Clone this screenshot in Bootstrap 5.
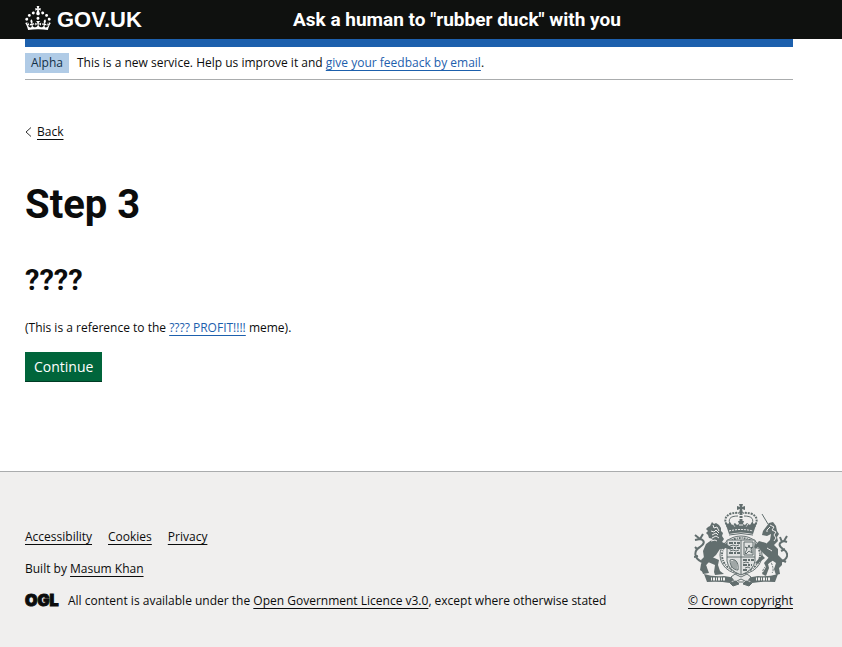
<!DOCTYPE html>
<html lang="en">
<head>
<meta charset="utf-8">
<meta name="viewport" content="width=device-width, initial-scale=1">
<title>Step 3 - Ask a human to "rubber duck" with you</title>
<link href="https://cdn.jsdelivr.net/npm/bootstrap@5.3.0/dist/css/bootstrap.min.css" rel="stylesheet">
<style>
body{font-family:"Open Sans","Liberation Sans",sans-serif;font-size:12px;line-height:20px;color:#0b0c0c;background:#f0efee}
.page-width{padding-left:25px;padding-right:49px}
.site-header{background:#0f110f;color:#fff}
.site-header .row{height:39px}
.brand-link{color:#fff;font:bold 22px/28px "Liberation Sans",sans-serif;gap:6px}
.service-link,h1,h2{font-family:Roboto,sans-serif}
.service-link{color:#fff;font-size:19px;line-height:24px;padding-left:12px}
.blue-bar{height:8px;background:#1d60ad}
.phase{border-bottom:1px solid #aaacad;padding:6px 0;gap:8px}
.phase-tag{background:#b0cbe6;color:#123047;padding:0 6px}
.line-link{color:#0b0c0c;text-decoration:underline;text-underline-offset:3px;text-decoration-thickness:1px}
.blue-link{color:#1d60ad}
.main-area{background:#fff;padding-bottom:90px}
.back-link{margin-top:42px;gap:5px}
h1{font-size:40px;line-height:44px;margin:41px 0 37px}
h2{font-size:29px;line-height:32px;margin:0 0 22px}
.main-area p{margin-bottom:14px}
.go-btn{background:#00653b;color:#fff;border:0;border-radius:0;box-shadow:0 1px 0 #003b24;font-size:14px;line-height:20px;padding:5px 9px 4px}
.go-btn:hover{background:#00542f;color:#fff}
.site-footer{border-top:1px solid #aaacad;padding-top:32px;padding-bottom:36px}
.footer-list{gap:16px}
.footer-text{gap:12px}
.licence{gap:9px}
.ogl{font:900 16px Inter,sans-serif}
</style>
<script defer src="https://cdn.jsdelivr.net/npm/bootstrap@5.3.0/dist/js/bootstrap.bundle.min.js"></script>
</head>
<body>
<header class="site-header page-width">
  <div class="row gx-0 align-items-center">
    <div class="col-4"><a href="#" class="brand-link d-flex align-items-start text-decoration-none">
      <svg width="26" height="24" viewBox="0 0 32 30" fill="currentColor" aria-hidden="true"><path d="M22.6 10.4c-1 .4-2-.1-2.4-1-.4-.9.1-2 1-2.4.9-.4 2 .1 2.4 1s-.1 2-1 2.4m-5.9 6.7c-.9.4-2-.1-2.4-1-.4-.9.1-2 1-2.4.9-.4 2 .1 2.4 1s-.1 2-1 2.4m10.8-3.7c-1 .4-2-.1-2.4-1-.4-.9.1-2 1-2.4.9-.4 2 .1 2.4 1s0 2-1 2.4m3.3 4.8c-1 .4-2-.1-2.4-1-.4-.9.1-2 1-2.4.9-.4 2 .1 2.4 1s-.1 2-1 2.4M17 4.7l2.3 1.2V2.5l-2.3.7-.2-.2.9-3h-3.4l.9 3-.2.2c-.1.1-2.3-.7-2.3-.7v3.4L15 4.7c.1.1.1.2.2.2l-1.3 4c-.1.2-.1.4-.1.6 0 1.1.8 2 1.9 2.2h.7c1-.2 1.9-1.1 1.9-2.1 0-.2 0-.4-.1-.6l-1.3-4c-.1-.2 0-.2.1-.3m-7.6 5.7c.9.4 2-.1 2.4-1 .4-.9-.1-2-1-2.4-.9-.4-2 .1-2.4 1s0 2 1 2.4m-5 3c.9.4 2-.1 2.4-1 .4-.9-.1-2-1-2.4-.9-.4-2 .1-2.4 1s.1 2 1 2.4m-3.2 4.8c.9.4 2-.1 2.4-1 .4-.9-.1-2-1-2.4-.9-.4-2 .1-2.4 1s0 2 1 2.4m14.8 11c4.4 0 8.6.3 12.3.8 1.1-4.5 2.4-7 3.7-8.8l-2.5-.9c.2 1.3.3 1.9 0 2.7-.4-.4-.8-1.1-1.1-2.3l-1.2 4c.7-.5 1.3-.8 2-.9-1.1 2.5-2.6 3.1-3.5 3-1.1-.2-1.7-1.2-1.5-2.1.3-1.2 1.5-1.5 2.1-.1 1.1-2.3-.8-3-2-2.3 1.9-1.9 2.1-3.5.6-5.6-2.1 1.6-2.1 3.2-1.2 5.5-1.2-1.4-3.2-.6-2.5 1.6.9-1.4 2.1-.5 1.9.8-.2 1.1-1.7 2.1-3.5 1.9-2.7-.2-2.9-2.1-2.9-3.6.7-.1 1.9.5 2.9 1.9l.4-4.3c-1.1 1.1-2.1 1.4-3.2 1.4.4-1.2 2.1-3 2.1-3h-5.4s1.7 1.9 2.1 3c-1.1 0-2.1-.2-3.2-1.4l.4 4.3c1-1.4 2.2-2 2.9-1.9-.1 1.5-.2 3.4-2.9 3.6-1.9.2-3.4-.8-3.5-1.9-.2-1.3 1-2.2 1.9-.8.7-2.3-1.2-3-2.5-1.6.9-2.2.9-3.9-1.2-5.5-1.5 2-1.3 3.7.6 5.6-1.2-.7-3.1 0-2 2.3.6-1.4 1.8-1.1 2.1.1.2.9-.3 1.9-1.5 2.1-.9.2-2.4-.5-3.5-3 .6 0 1.2.3 2 .9l-1.2-4c-.3 1.1-.7 1.9-1.1 2.3-.3-.8-.2-1.4 0-2.7l-2.9.9C1.3 23 2.6 25.5 3.7 30c3.7-.5 7.9-.8 12.3-.8"/></svg>
      <span>GOV.UK</span></a></div>
    <div class="col-8"><a href="#" class="service-link d-block fw-bold text-decoration-none text-nowrap">Ask a human to "rubber duck" with you</a></div>
  </div>
</header>
<main class="main-area page-width">
  <div class="blue-bar"></div>
  <div class="phase d-flex">
    <strong class="phase-tag fw-normal">Alpha</strong>
    <span>This is a new service. Help us improve it and <a class="line-link blue-link" href="#">give your feedback by email</a>.</span>
  </div>
  <div class="back-link d-flex align-items-center">
    <svg width="7" height="10" viewBox="0 0 7 10" fill="none" stroke="#333" aria-hidden="true"><path d="M6 .5 1 5l5 4.5"/></svg>
    <a class="line-link" href="#">Back</a>
  </div>
  <h1 class="fw-bold">Step 3</h1>
  <h2 class="fw-bold">????</h2>
  <p>(This is a reference to the <a class="line-link blue-link" href="#">???? PROFIT!!!!</a> meme).</p>
  <button type="button" class="btn go-btn">Continue</button>
</main>
<footer class="site-footer page-width">
  <div class="d-flex justify-content-between align-items-end">
    <div class="footer-text d-flex flex-column">
      <ul class="footer-list list-unstyled d-flex mb-0">
        <li><a class="line-link" href="#">Accessibility</a></li>
        <li><a class="line-link" href="#">Cookies</a></li>
        <li><a class="line-link" href="#">Privacy</a></li>
      </ul>
      <div>Built by <a class="line-link" href="#">Masum Khan</a></div>
      <div class="licence d-flex align-items-center">
        <svg class="ogl flex-shrink-0" width="34" height="16" viewBox="0 0 34 16" fill="#0b0c0c" stroke="#0b0c0c" stroke-width="1" overflow="visible"><text x="0" y="13">OGL</text></svg>
        <span>All content is available under the <a class="line-link" href="#">Open Government Licence v3.0</a>, except where otherwise stated</span>
      </div>
    </div>
    <a class="line-link d-flex flex-column align-items-center text-nowrap" href="#">
      <svg class="mb-1" width="94" height="83" viewBox="0 0 94 83" fill="none" stroke="#626e6e" stroke-width="1" stroke-linejoin="round" aria-hidden="true">
        <!-- crown -->
        <path d="M45 0h4l-1 3 3-1v4l-3-1 1 4h-4l1-4-3 1V2l3 1z" fill="#626e6e" stroke="none"/>
        <path d="M34 23C27 13 35 8 45 9M60 23c7-10-1-15-11-14" stroke-width="2" stroke-dasharray="2 1"/>
        <path d="M37 22c-4-7-1-10 7-10M57 22c4-7 1-10-7-10"/>
        <path d="M47 9v9" stroke-width="3" stroke-dasharray="2 1"/>
        <path d="m31 18 3 2 2-2 2 3 3-2 2 2 2-1-1-3h6l-1 3 2 1 2-2 3 2 2-3 2 2 3-2-4 12q-12-3-24 0z" fill="#626e6e" stroke="none"/>
        <path d="M35 27q12-3 24 0M39 20l2 3m5-3v3m2-3v3m6-3-2 3" stroke="#f0efee" stroke-dasharray="2 1"/>
        <path d="M35 31q12-3 24 0" stroke-width="1"/>
        <!-- garter and quartered shield -->
        <ellipse cx="47" cy="51" rx="21" ry="19"/>
        <ellipse cx="47" cy="51" rx="19" ry="17" stroke-width="2" stroke-dasharray="1 1 2 1"/>
        <path d="M33 36h28v21q-1 9-14 14-13-5-14-14z" fill="#dfe1e0"/>
        <path d="M47 36v35M33 53h28"/>
        <g stroke-width="2" stroke-dasharray="4 1 2 1"><path d="M35 39h11M35 44h11M35 49h11M49 56h11M49 61h9M49 66h5"/></g>
        <path d="m36 42 3-1 3 1 3-1m-9 6 3-1 3 1 3-1m4 13 3-1 3 1m-4 5 3-1 2 1"/>
        <path d="m51 49 2-4-2-2 3 1 1-3 1 3 3-1-2 2 1 4-3-2-3 3zM50 38h9v13h-9z"/>
        <path d="M36 56c5-2 9 2 8 10-5 0-8-4-8-10m2 1v7m2-8v9m2-8v8"/>
        <!-- lion -->
        <g fill="#626e6e" stroke="none">
          <path d="m16 22 2-4 2 2 2-1 3 2 2 3v3l2 2-1 3 2 3-2 3 6 3 3 5-5-2-6 1-4 6-7 6-3 4 1 6-3 2-4-3 1-6 3-6-1-7 3-7 7-5-4-1-1-3-2-2 2-2-2-2 2-2z"/>
          <path d="m25 39 11 3 2 3-6-1-9 1zM7 56l5-5 5 5-5 5 3 8-6 1-1-3 1-4zM18 53l7 3-1 5 2 6 4 3-9 1-1-3 1-7-7-3z"/>
        </g>
        <path d="m19 21 1 3 3-1 2 4m-8 0 3 1 2-2 3 3m-7 2 4-2 2 2m-6 3 4-2 3 2m-8 3 4-1 2 1" stroke="#f0efee"/>
        <path d="M8 58C-1 54 0 46 6 43c6-4 4-7 0-8l-5-4m5 4-5 1m5-1 3-5M4 46l-3-3m3 9-4 1" stroke-width="2"/>
        <!-- unicorn -->
        <g fill="#626e6e" stroke="none">
          <path d="m72 23 3-4 4-1 3 4 1 5 2 3-2 3 1 4-4 4 4 4v6l4 4v6l-3 3 1 6-4 1-2-6 2-6-6-4-7-6-5-6-4-1 5-3 7 1 4-4 1-6-4 2-5-1 1-4z"/>
          <path d="m65 37 7 2 2 3-8-1-4 4-2-2zM68 51l-7 8 2 1 8-6zM76 52l-6 7 2 4-4 7 4 2 3-8-1-4 7-5z"/>
        </g>
        <path d="m73 26 3-3m0-2 4 2-2 3 4 2-2 3 2 3-2 3m-8-10h2M73 44l5 3" stroke="#f0efee"/>
        <path d="m68 10 6 10"/>
        <path d="M86 58c9-3 9-9 3-13-6-4-3-7 1-8l3-5m-3 5 3 1m-5 0-2-5M87 47l4-2M88 56l4 2" stroke-width="2"/>
        <path d="M75 43q3 13-3 19t-1 9M76 56q5 10 2 13" stroke-dasharray="2 1"/>
        <!-- motto ribbon and scrolls -->
        <path d="m10 70 3 8q12-1 23 1l6-5-12-2q-11 1-20-2m74 0-3 8q-12-1-23 1l-6-5 12-2q11 1 20-2" fill="#626e6e" stroke="none"/>
        <path d="M17 75h15M62 75h15" stroke="#f0efee" stroke-width="3" stroke-dasharray="1 1 2 1"/>
        <path d="m37 73 4-3 6 3 6-3 4 3-4 5-6-3-6 3z" fill="#e6e7e6"/>
        <path d="m36 79 6-2 3 3-6 2zM58 79l-6-2-3 3 6 2zM44 78h6" fill="#626e6e"/>
      </svg>
      <span>© Crown copyright</span>
    </a>
  </div>
</footer>
</body>
</html>
